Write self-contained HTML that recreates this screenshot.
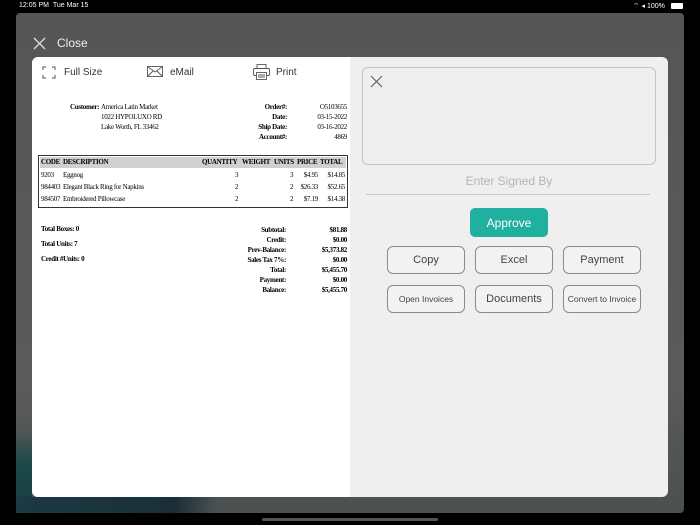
<!DOCTYPE html>
<html><head><style>
*{margin:0;padding:0;box-sizing:border-box}
body{width:700px;height:525px;background:#000;position:relative;overflow:hidden;font-family:"Liberation Sans",sans-serif}
.a{position:absolute;white-space:nowrap}
.s{font-family:"Liberation Serif",serif;font-size:7px;color:#000;letter-spacing:-0.3px}
.b{font-weight:bold}
.r{text-align:right}
.btn{position:absolute;border:1px solid #8a8a8a;border-radius:6px;background:#f2f2f2;color:#444;font-size:11px;display:flex;align-items:center;justify-content:center;width:78px;height:28px}
</style></head><body>
<div class="a" style="left:19px;top:2px;font-size:7px;color:#fff">12:05 PM&nbsp;&nbsp;Tue Mar 15</div>
<div class="a" style="left:633px;top:2px;font-size:7px;color:#fff">⌔ ◂ 100%</div>
<div class="a" style="left:671px;top:3px;width:12px;height:6px;background:#fff;border-radius:1px"></div>
<div class="a" style="left:16px;top:13px;width:668px;height:500px;border-radius:4px;background:linear-gradient(180deg,#555 0%,#5a5a5a 75%,#4a5050 100%)"></div>
<div class="a" style="left:16px;top:430px;width:16px;height:83px;background:linear-gradient(180deg,rgba(30,70,70,0),#1d4a48 40%,#1b3a44)"></div>
<div class="a" style="left:16px;top:497px;width:200px;height:16px;background:linear-gradient(90deg,#1b3a44,#1a2e38 80%,rgba(26,46,56,0));border-radius:0 0 0 4px"></div>
<svg class="a" style="left:33px;top:37px" width="13" height="13"><path d="M1 1L12 12M12 1L1 12" stroke="#ddd" stroke-width="1.3"/></svg>
<div class="a" style="left:57px;top:36px;font-size:12px;color:#eee">Close</div>
<div class="a" style="left:32px;top:57px;width:636px;height:440px;border-radius:6px;overflow:hidden;background:#efefef">
<div class="a" style="left:0;top:0;width:318px;height:440px;background:#fff"></div>
</div>
<svg class="a" style="left:42px;top:66px" width="14" height="13" fill="none" stroke="#555" stroke-width="1"><path d="M1 4V1H4M10 1H13V4M13 9V12H10M4 12H1V9"/></svg>
<div class="a" style="left:64px;top:66px;font-size:10px;color:#333;line-height:13px">Full Size</div>
<svg class="a" style="left:147px;top:66px" width="17" height="12" fill="none" stroke="#555" stroke-width="0.9"><rect x="0.5" y="0.5" width="15" height="10"/><path d="M0.5 0.5L8 6L15.5 0.5M0.5 10.5L6 5M15.5 10.5L10 5"/></svg>
<div class="a" style="left:170px;top:66px;font-size:10px;color:#333;line-height:13px">eMail</div>
<svg class="a" style="left:253px;top:64px" width="17" height="16" fill="none" stroke="#555" stroke-width="0.9"><rect x="4" y="0.5" width="9" height="4"/><rect x="0.5" y="4.5" width="16" height="7" rx="1"/><rect x="3.5" y="8.5" width="10" height="7" fill="#fff"/><path d="M5 11H12M5 13H12"/></svg>
<div class="a" style="left:276px;top:66px;font-size:10px;color:#333;line-height:13px">Print</div>

<div class="a s b" style="left:70px;top:103px">Customer:</div>
<div class="a s" style="left:101px;top:103px">America Latin Market</div>
<div class="a s" style="left:101px;top:113px">1022 HYPOLUXO RD</div>
<div class="a s" style="left:101px;top:123px">Lake Worth, FL 33462</div>
<div class="a s b r" style="left:230px;width:57px;top:103px">Order#:</div>
<div class="a s b r" style="left:230px;width:57px;top:113px">Date:</div>
<div class="a s b r" style="left:230px;width:57px;top:123px">Ship Date:</div>
<div class="a s b r" style="left:230px;width:57px;top:133px">Account#:</div>
<div class="a s r" style="left:290px;width:57px;top:103px">O5103655</div>
<div class="a s r" style="left:290px;width:57px;top:113px">03-15-2022</div>
<div class="a s r" style="left:290px;width:57px;top:123px">03-16-2022</div>
<div class="a s r" style="left:290px;width:57px;top:133px">4869</div>

<div class="a" style="left:38px;top:155px;width:310px;height:53px;border:1px solid #333"></div>
<div class="a" style="left:40px;top:157px;width:306px;height:11px;background:#d0d0d0"></div>
<div class="a s b" style="left:41px;top:158px">CODE</div>
<div class="a s b" style="left:63px;top:158px">DESCRIPTION</div>
<div class="a s b" style="left:202px;top:158px">QUANTITY</div>
<div class="a s b" style="left:242px;top:158px">WEIGHT</div>
<div class="a s b" style="left:274px;top:158px">UNITS</div>
<div class="a s b" style="left:297px;top:158px">PRICE</div>
<div class="a s b" style="left:320px;top:158px">TOTAL</div>
<div class="a s" style="left:41px;top:171px">9203</div><div class="a s" style="left:63px;top:171px">Eggnog</div>
<div class="a s" style="left:235px;top:171px">3</div><div class="a s" style="left:290px;top:171px">3</div>
<div class="a s r" style="left:290px;width:28px;top:171px">$4.95</div><div class="a s r" style="left:318px;width:27px;top:171px">$14.85</div>
<div class="a s" style="left:41px;top:183px">984403</div><div class="a s" style="left:63px;top:183px">Elegant Black Ring for Napkins</div>
<div class="a s" style="left:235px;top:183px">2</div><div class="a s" style="left:290px;top:183px">2</div>
<div class="a s r" style="left:290px;width:28px;top:183px">$26.33</div><div class="a s r" style="left:318px;width:27px;top:183px">$52.65</div>
<div class="a s" style="left:41px;top:195px">984507</div><div class="a s" style="left:63px;top:195px">Embroidered Pillowcase</div>
<div class="a s" style="left:235px;top:195px">2</div><div class="a s" style="left:290px;top:195px">2</div>
<div class="a s r" style="left:290px;width:28px;top:195px">$7.19</div><div class="a s r" style="left:318px;width:27px;top:195px">$14.38</div>

<div class="a s b" style="left:41px;top:225px">Total Boxes: 0</div>
<div class="a s b" style="left:41px;top:240px">Total Units: 7</div>
<div class="a s b" style="left:41px;top:255px">Credit #Units: 0</div>
<div class="a s b r" style="left:220px;width:66px;top:225px;line-height:10px">Subtotal:<br>Credit:<br>Prev-Balance:<br>Sales Tax 7%:<br>Total:<br>Payment:<br>Balance:</div>
<div class="a s b r" style="left:290px;width:57px;top:225px;line-height:10px">$81.88<br>$0.00<br>$5,373.82<br>$0.00<br>$5,455.70<br>$0.00<br>$5,455.70</div>

<div class="a" style="left:362px;top:67px;width:294px;height:98px;border:1px solid #c4c4c4;border-radius:6px"></div>
<svg class="a" style="left:370px;top:75px" width="13" height="13"><path d="M1 1L12 12M12 1L1 12" stroke="#555" stroke-width="1"/></svg>
<div class="a" style="left:362px;top:174px;width:294px;text-align:center;font-size:12px;color:#b5b5b5">Enter Signed By</div>
<div class="a" style="left:366px;top:194px;width:284px;height:1px;background:#c8c8c8"></div>
<div class="a" style="left:470px;top:208px;width:78px;height:29px;background:#20b0a0;border-radius:5px;color:#fff;font-size:12px;display:flex;align-items:center;justify-content:center">Approve</div>
<div class="btn" style="left:387px;top:246px">Copy</div>
<div class="btn" style="left:475px;top:246px">Excel</div>
<div class="btn" style="left:563px;top:246px">Payment</div>
<div class="btn" style="left:387px;top:285px;font-size:8.5px">Open Invoices</div>
<div class="btn" style="left:475px;top:285px">Documents</div>
<div class="btn" style="left:563px;top:285px;font-size:8.5px">Convert to Invoice</div>
<div class="a" style="left:262px;top:518px;width:176px;height:3px;border-radius:2px;background:#555"></div>
</body></html>
